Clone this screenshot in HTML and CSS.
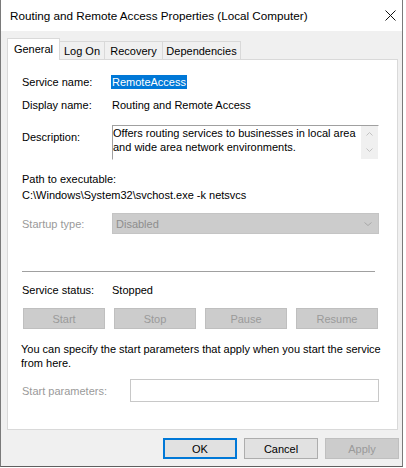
FILE: index.html
```html
<!DOCTYPE html>
<html>
<head>
<meta charset="utf-8">
<title>Routing and Remote Access Properties</title>
<link rel="stylesheet" href="styles.css">
</head>
<body>
<div class="window">
  <div class="titlebar">
    <span class="title">Routing and Remote Access Properties (Local Computer)</span>
    <span class="close"><svg width="11" height="11" viewBox="0 0 11 11"><path d="M0.5 0.5L10.5 10.5M10.5 0.5L0.5 10.5" stroke="#111" stroke-width="1" fill="none"/></svg></span>
  </div>
  <div class="client">
    <div class="tabs">
      <div class="tab active t-general">General</div>
      <div class="tab t-logon">Log On</div>
      <div class="tab t-recovery">Recovery</div>
      <div class="tab t-deps">Dependencies</div>
    </div>
    <div class="panel">
      <div class="row r-name"><span class="label">Service name:</span><span class="sel">RemoteAccess</span></div>
      <div class="row r-display"><span class="label">Display name:</span><span>Routing and Remote Access</span></div>
      <div class="r-desc">
        <span class="label desc-label">Description:</span>
        <div class="textbox">
          <div class="tb-text">Offers routing services to businesses in local area<br>and wide area network environments.</div>
          <div class="vscroll">
            <svg width="7" height="4" viewBox="0 0 7 4"><path d="M0.5 3.5L3.5 0.5L6.5 3.5" stroke="#c2c2c2" fill="none"/></svg>
            <svg width="7" height="4" viewBox="0 0 7 4"><path d="M0.5 0.5L3.5 3.5L6.5 0.5" stroke="#c2c2c2" fill="none"/></svg>
          </div>
        </div>
      </div>
      <div class="path">
        <div>Path to executable:</div>
        <div>C:\Windows\System32\svchost.exe -k netsvcs</div>
      </div>
      <div class="row r-startup">
        <span class="label disabled">Startup type:</span>
        <div class="combo"><span>Disabled</span><svg width="8" height="4" viewBox="0 0 8 4"><path d="M0.5 0.5L4 3.5L7.5 0.5" stroke="#a8a8a8" fill="none"/></svg></div>
      </div>
      <div class="sep"></div>
      <div class="row r-status"><span class="label">Service status:</span><span>Stopped</span></div>
      <div class="svc-buttons">
        <div class="btn dis">Start</div>
        <div class="btn dis">Stop</div>
        <div class="btn dis">Pause</div>
        <div class="btn dis">Resume</div>
      </div>
      <p class="hint">You can specify the start parameters that apply when you start the service<br>from here.</p>
      <div class="row r-params">
        <span class="label disabled wide">Start parameters:</span>
        <div class="input"></div>
      </div>
    </div>
    <div class="footer">
      <div class="btn fbtn ok">OK</div>
      <div class="btn fbtn">Cancel</div>
      <div class="btn fbtn dis">Apply</div>
    </div>
  </div>
</div>
</body>
</html>
```
FILE: styles.css
```css
* { box-sizing: border-box; }
html, body { margin: 0; padding: 0; }
body {
  width: 406px;
  height: 468px;
  background: #fff;
  font-family: "Liberation Sans", Arial, sans-serif;
  font-size: 11px;
  color: #000;
  overflow: hidden;
}
.window {
  width: 403px;
  height: 467px;
  border-left: 1px solid #7a7a7a;
  border-right: 1px solid #7a7a7a;
  border-bottom: 1px solid #5f5f5f;
  display: flex;
  flex-direction: column;
}
.titlebar {
  height: 31px;
  flex: none;
  background: #fff;
  display: flex;
  align-items: center;
  justify-content: space-between;
  padding-left: 9px;
}
.title { font-size: 11.7px; }
.close { display: flex; margin-right: 6px; }
.client {
  flex: 1;
  background: #f0f0f0;
  padding: 7px 4px 0 6px;
  display: flex;
  flex-direction: column;
}
.tabs {
  height: 22px;
  display: flex;
  align-items: flex-end;
  margin-bottom: -1px;
  position: relative;
  z-index: 1;
}
.tab {
  height: 19px;
  border: 1px solid #d9d9d9;
  background: #f0f0f0;
  display: flex;
  align-items: center;
  justify-content: center;
  margin-left: -1px;
}
.tab.active {
  height: 22px;
  background: #fff;
  border-bottom: none;
  margin-left: 0;
  position: relative;
  z-index: 2;
  padding-bottom: 1px;
}
.t-general { width: 53px; }
.t-logon { width: 46px; }
.t-recovery { width: 59px; }
.t-deps { width: 79px; }
.panel {
  height: 371px;
  background: #fff;
  border: 1px solid #d9d9d9;
  padding-left: 14px;
  display: flex;
  flex-direction: column;
}
.row { display: flex; align-items: center; }
.label { width: 90px; flex: none; }
.label.wide { width: 108px; }
.disabled { color: #9a9a9a; }
.r-name { margin-top: 14px; height: 16px; }
.sel {
  background: #0078d7;
  color: #fff;
  line-height: 14px;
  padding: 0 1px;
  margin-left: -1px;
}
.r-display { margin-top: 7px; height: 16px; }
.r-desc { margin-top: 12px; display: flex; align-items: flex-start; }
.desc-label { padding-top: 4px; line-height: 16px; }
.textbox {
  width: 267px;
  height: 35px;
  border-top: 1px solid #a0a0a0;
  border-left: 1px solid #a0a0a0;
  border-right: 1px solid #fff;
  border-bottom: 1px solid #fff;
  display: flex;
}
.tb-text { flex: 1; line-height: 14px; padding-left: 0; }
.vscroll {
  width: 17px;
  background: #f0f0f0;
  display: flex;
  flex-direction: column;
  justify-content: space-between;
  align-items: center;
  padding: 6px 0 7px;
}
.vscroll svg { display: block; }
.path { margin-top: 11px; line-height: 16px; }
.r-startup { margin-top: 10px; height: 21px; }
.combo {
  width: 267px;
  height: 21px;
  background: #cccccc;
  border: 1px solid #c4c4c4;
  color: #8e8e8e;
  padding: 0 6px 0 3px;
  display: flex;
  align-items: center;
  justify-content: space-between;
}
.sep {
  margin-top: 37px;
  width: 353px;
  height: 1px;
  background: #a0a0a0;
}
.r-status { margin-top: 10px; height: 16px; }
.svc-buttons {
  margin-top: 10px;
  padding-left: 1px;
  display: flex;
  gap: 9px;
}
.btn {
  width: 82px;
  height: 21px;
  border: 1px solid #adadad;
  background: #e1e1e1;
  display: flex;
  align-items: center;
  justify-content: center;
}
.btn.dis {
  background: #cccccc;
  border-color: #bfbfbf;
  color: #9a9a9a;
}
.hint {
  margin: 13px 0 0 -1px;
  line-height: 14px;
}
.r-params { margin-top: 9px; height: 23px; }
.input {
  width: 249px;
  height: 23px;
  border: 1px solid #c8c8c8;
  background: #fff;
}
.footer {
  margin-top: 8px;
  margin-right: -1px;
  display: flex;
  justify-content: flex-end;
  gap: 7px;
}
.fbtn { width: 74px; }
.btn.ok {
  border-color: #0078d7;
  box-shadow: inset 0 0 0 1px #0078d7;
}
```
